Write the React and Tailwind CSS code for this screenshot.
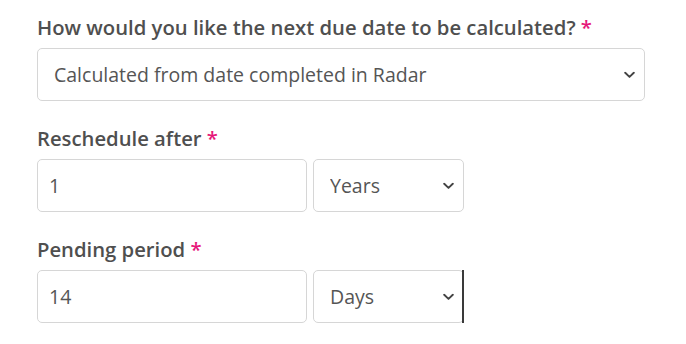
import React from 'react';

const Chevron = () => (
  <svg
    className="pointer-events-none absolute right-[10px] top-1/2 -translate-y-1/2"
    width="11"
    height="7"
    viewBox="0 0 11 7"
    fill="none"
  >
    <path d="M1.2 1.2 L5.5 5.4 L9.8 1.2" stroke="#444" strokeWidth="1.9" strokeLinecap="round" strokeLinejoin="round" />
  </svg>
);

const Label = ({ children }) => (
  <label className="block text-[20.25px] leading-[24px] font-semibold text-[#4f4f4f] mb-[9px]">
    {children} <span className="text-[#e6177a]">*</span>
  </label>
);

const SelectBox = ({ value, options, className = '', cursor = false }) => (
  <div className={`relative ${className}`}>
    <select
      defaultValue={value}
      className="w-full h-[53px] appearance-none bg-white border border-[#d6d6d6] rounded-[5px] pl-[16px] pr-8 text-[19.5px] text-[#555] outline-none"
    >
      {options.map((o) => (
        <option key={o}>{o}</option>
      ))}
    </select>
    <Chevron />
    {cursor && <div className="absolute right-0 top-0 h-[53px] w-[2px] bg-[#3a3a3a]" />}
  </div>
);

const TextBox = ({ value }) => (
  <input
    type="text"
    defaultValue={value}
    className="w-[270px] h-[53px] bg-white border border-[#d6d6d6] rounded-[5px] px-[11px] text-[19.5px] text-[#555] outline-none"
  />
);

export default function App() {
  return (
    <div
      className="w-[686px] h-[344px] bg-white pl-[37px] pt-[15px]"
      style={{ fontFamily: '"Open Sans", "Noto Sans", sans-serif' }}
    >
      <div className="w-[608px]">
        {/* Calculation method */}
        <Label>How would you like the next due date to be calculated?</Label>
        <SelectBox
          value="Calculated from date completed in Radar"
          options={['Calculated from date completed in Radar', 'Calculated from original due date']}
        />

        {/* Reschedule after */}
        <div className="mt-[25px]">
          <Label>Reschedule after</Label>
          <div className="flex gap-[6px]">
            <TextBox value="1" />
            <SelectBox className="w-[151px]" value="Years" options={['Days', 'Weeks', 'Months', 'Years']} />
          </div>
        </div>

        {/* Pending period */}
        <div className="mt-[25px]">
          <Label>Pending period</Label>
          <div className="flex gap-[6px]">
            <TextBox value="14" />
            <SelectBox className="w-[151px]" value="Days" options={['Days', 'Weeks', 'Months', 'Years']} cursor />
          </div>
        </div>
      </div>
    </div>
  );
}
